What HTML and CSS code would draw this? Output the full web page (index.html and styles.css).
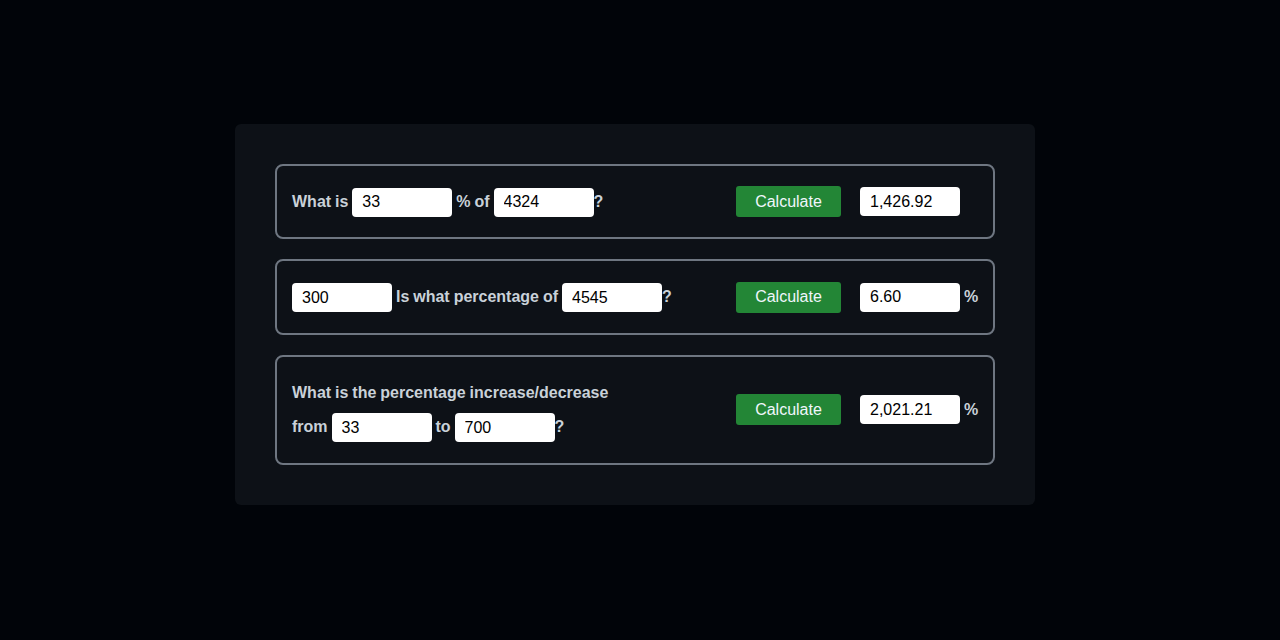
FILE: index.html
```html
<!DOCTYPE html>
<html>
<head>
<meta charset="utf-8">
<link rel="stylesheet" href="styles.css">
</head>
<body>
<div class="panel">
  <div class="row">
    <div class="left">
      <div class="line">What is <input class="field" value="33"> % of <input class="field" value="4324">?</div>
    </div>
    <div class="right">
      <button class="btn">Calculate</button>
      <input class="field result" value="1,426.92">
      <span class="unit hidden">%</span>
    </div>
  </div>
  <div class="row row-tall">
    <div class="left">
      <div class="line"><input class="field" value="300"> Is what percentage of <input class="field" value="4545">?</div>
    </div>
    <div class="right">
      <button class="btn">Calculate</button>
      <input class="field result" value="6.60">
      <span class="unit">%</span>
    </div>
  </div>
  <div class="row row-stack">
    <div class="left stack">
      <div class="line line-head">What is the percentage increase/decrease</div>
      <div class="line">from <input class="field" value="33"> to <input class="field" value="700">?</div>
    </div>
    <div class="right">
      <button class="btn">Calculate</button>
      <input class="field result" value="2,021.21">
      <span class="unit">%</span>
    </div>
  </div>
</div>
</body>
</html>
```
FILE: styles.css
```css
html, body {
  margin: 0;
  padding: 0;
  background: #010409;
  font-family: "Liberation Sans", Arial, sans-serif;
}
body {
  padding: 124px 245px 0 235px;
  height: 640px;
  box-sizing: border-box;
}
.panel {
  background: #0d1117;
  border-radius: 6px;
  padding: 40px;
  display: flex;
  flex-direction: column;
  gap: 20px;
}
.row {
  border: 2px solid #6e7681;
  border-radius: 8px;
  padding: 20px 15px;
  display: flex;
  align-items: center;
  justify-content: space-between;
  height: 31px;
}
.row-tall {
  height: 32px;
}
.row-stack {
  height: auto;
  padding-bottom: 21px;
}
.left {
  display: flex;
  flex-direction: column;
  gap: 4px;
}
.line {
  color: #c9d1d9;
  font-weight: bold;
  font-size: 16px;
  line-height: 30px;
  height: 30px;
  white-space: nowrap;
  word-spacing: -0.5px;
}
.line-head {
  height: 31px;
  line-height: 32px;
}
.field {
  width: 100px;
  height: 29px;
  box-sizing: border-box;
  border: none;
  border-radius: 4px;
  background: #ffffff;
  color: #000000;
  font-family: "Liberation Sans", Arial, sans-serif;
  font-size: 16px;
  padding: 0 10px;
  vertical-align: middle;
  margin: 0;
  outline: none;
  word-spacing: normal;
}
.right {
  display: flex;
  align-items: center;
}
.btn {
  width: 105px;
  height: 31px;
  background: #238636;
  color: #f0f6fc;
  border: none;
  border-radius: 3px;
  font-family: "Liberation Sans", Arial, sans-serif;
  font-size: 16px;
  margin-right: 19px;
  padding: 0;
}
.unit {
  color: #c9d1d9;
  font-weight: bold;
  font-size: 16px;
  margin-left: 4px;
  width: 14px;
}
.hidden {
  visibility: hidden;
}
```
